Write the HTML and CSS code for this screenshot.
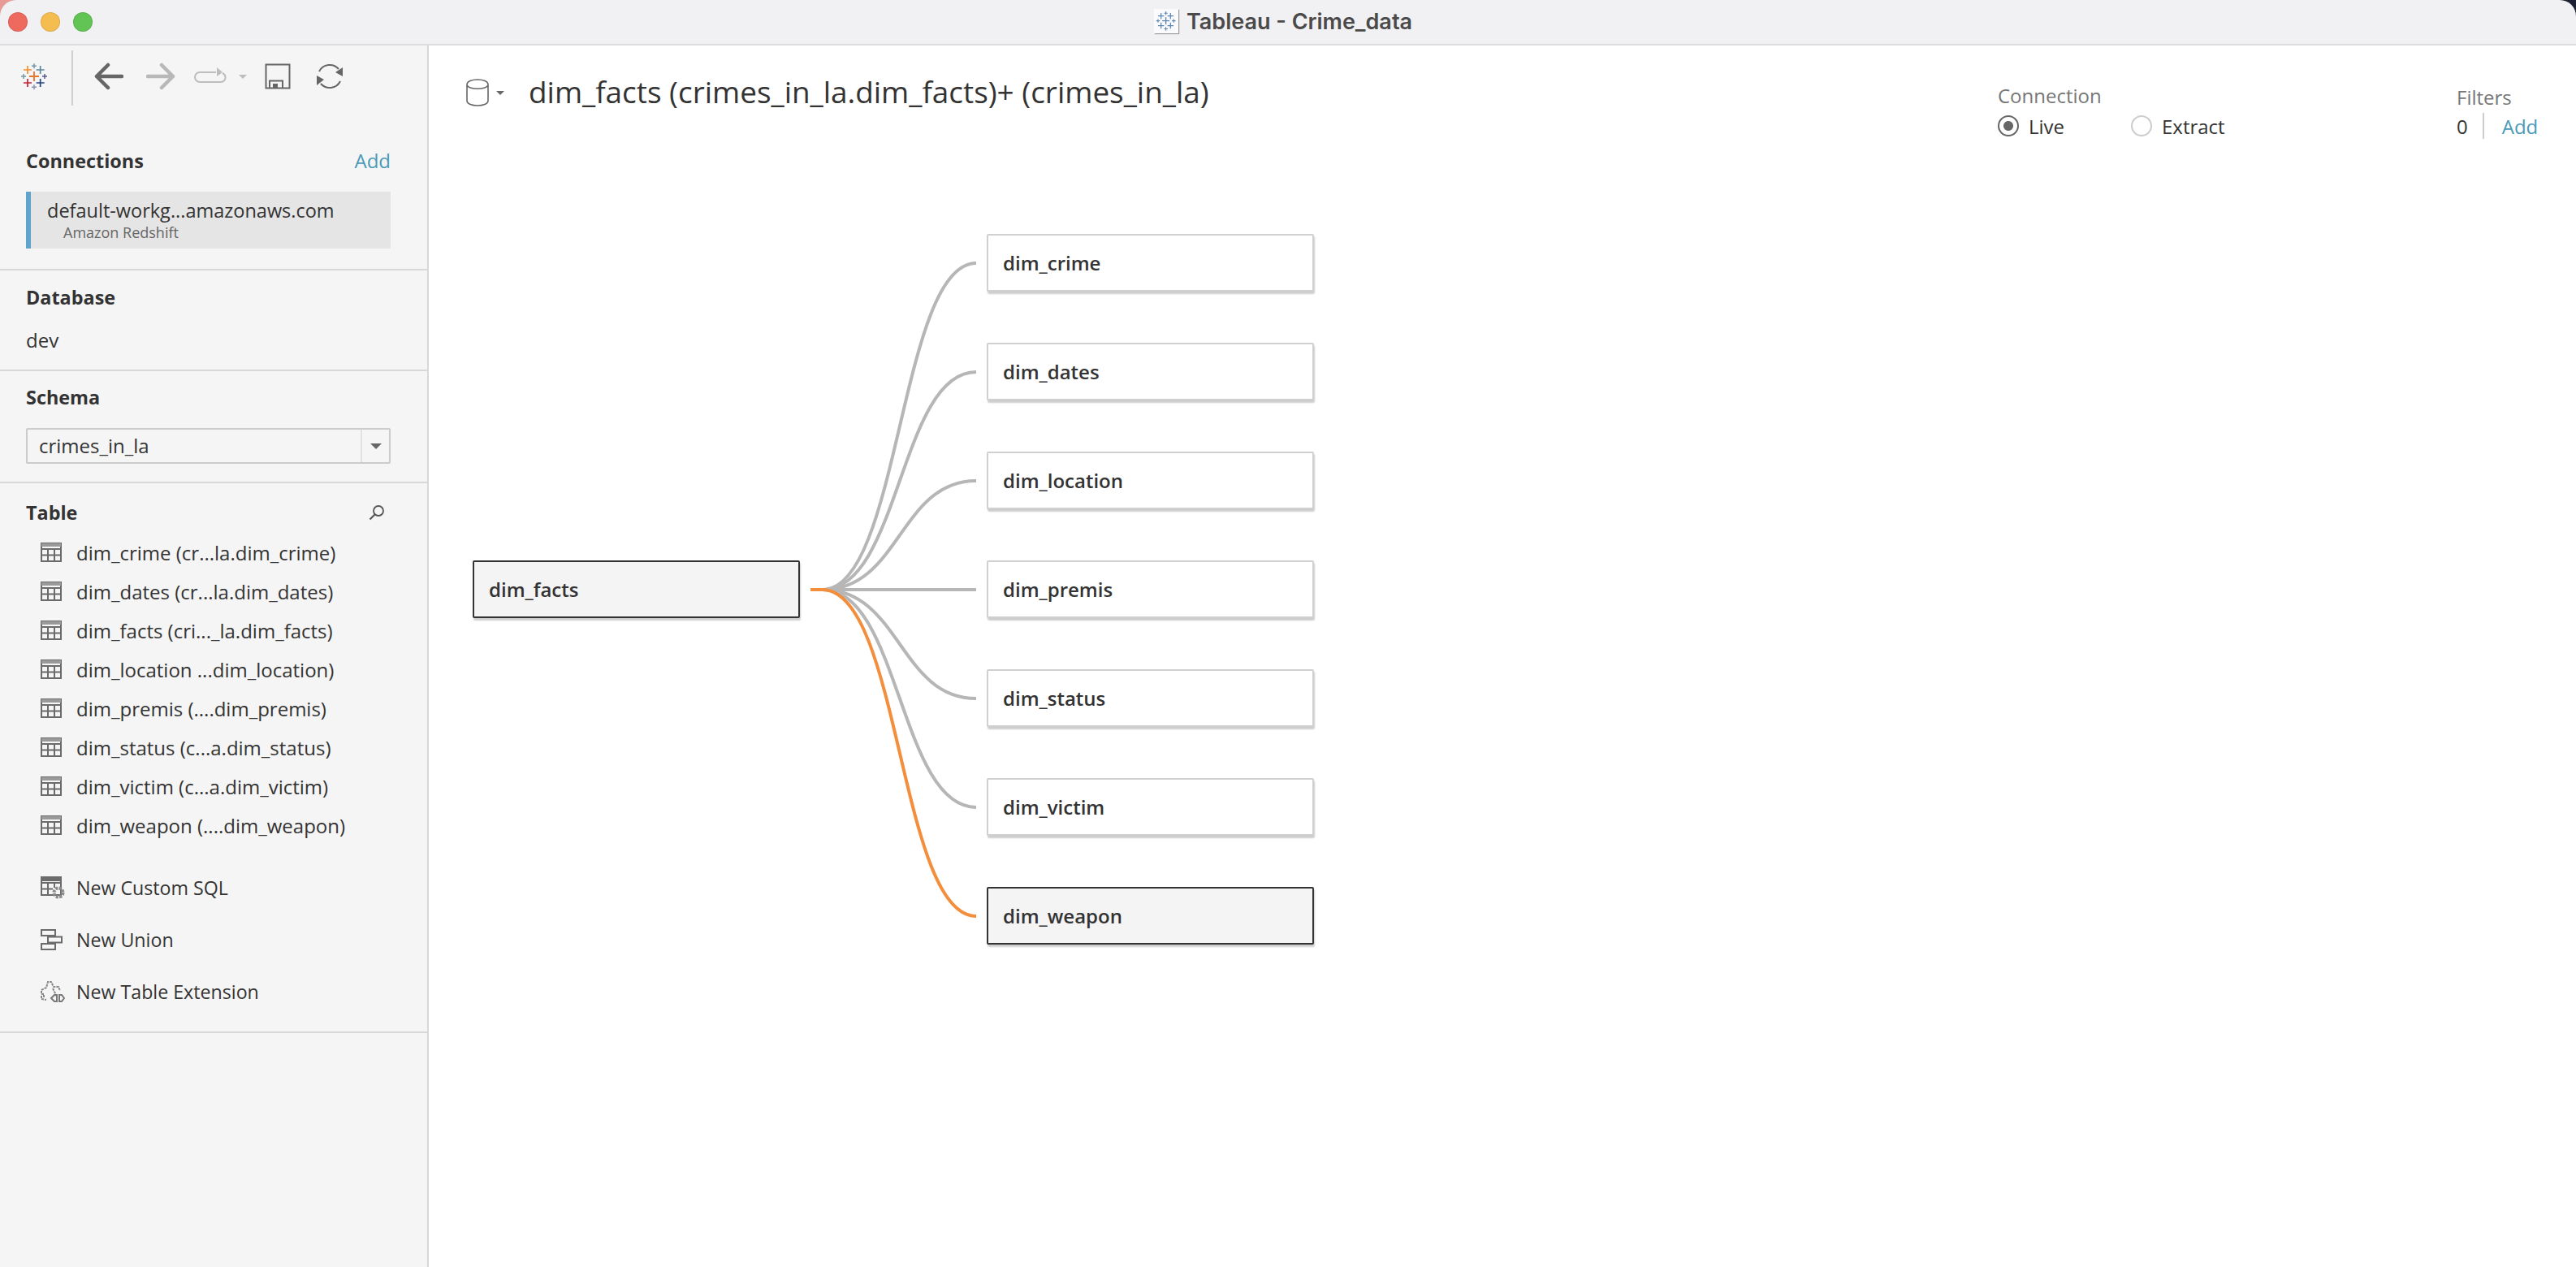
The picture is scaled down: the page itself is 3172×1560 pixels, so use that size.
FILE: index.html
```html
<!DOCTYPE html>
<html lang="en">
<head>
    <meta charset="UTF-8">
    <title>Tableau - Crime_data</title>
    <link rel="stylesheet" href="styles.css">
</head>
<body>
    <svg class="defs" width="0" height="0">
        <symbol id="tbl" viewBox="0 0 26 24">
            <path d="M1 1h24v22H1zM1 8h24M1 15.500h24M9 8v15M17 8v15" fill="none" stroke="#6b6b6b" stroke-width="2"/>
            <path d="M1 1h24v4H1z" fill="#9a9a9a"/>
        </symbol>
        <symbol id="crosses" viewBox="15 50 105 105">
            <path d="M66 83v36M48 101h36" stroke-width="5.500"/>
            <path d="M42 62v30M27 77h30M89 62v30M74 77h30M42 110v30M27 125h30M89 110v30M74 125h30" stroke-width="5"/>
            <path d="M66 54v18M57 63h18M27 92v18M18 101h18M105 92v18M96 101h18M66 132v18M57 141h18" stroke-width="4.500"/>
        </symbol>
    </svg>

    <div class="titlebar">
        <div class="lights">
            <span class="light red"></span>
            <span class="light yellow"></span>
            <span class="light green"></span>
        </div>
        <div class="wintitle">
            <span class="docicon"><svg width="26" height="26" class="bluecross"><use href="#crosses"/></svg></span>
            <span>Tableau - Crime_data</span>
        </div>
        <div></div>
    </div>

    <div class="app">
        <div class="sidebar">
            <div class="toolbar">
                <svg class="logo" viewBox="15 50 105 105" width="35" height="35">
                    <path d="M66 83v36M48 101h36" stroke="#e8762d" stroke-width="5.500"/>
                    <path d="M42 62v30M27 77h30" stroke="#f28e2b" stroke-width="5"/>
                    <path d="M89 62v30M74 77h30" stroke="#5b879b" stroke-width="5"/>
                    <path d="M42 110v30M27 125h30" stroke="#c72037" stroke-width="5"/>
                    <path d="M89 110v30M74 125h30" stroke="#1f447f" stroke-width="5"/>
                    <path d="M66 54v18M57 63h18M27 92v18M18 101h18" stroke="#7099a6" stroke-width="4.500"/>
                    <path d="M105 92v18M96 101h18" stroke="#59598e" stroke-width="4.500"/>
                    <path d="M66 132v18M57 141h18" stroke="#8b91b5" stroke-width="4.500"/>
                </svg>
                <span class="tooldiv"></span>
                <svg class="tool back" width="36" height="34" viewBox="0 0 36 34"><path d="M34 17H3M17 3L3 17l14 14" fill="none" stroke="#666" stroke-width="4.500" stroke-linecap="round" stroke-linejoin="round"/></svg>
                <svg class="tool fwd" width="36" height="34" viewBox="0 0 36 34"><path d="M2 17h31M19 3l14 14-14 14" fill="none" stroke="#b8b8b8" stroke-width="4.500" stroke-linecap="round" stroke-linejoin="round"/></svg>
                <svg class="tool redo" width="42" height="20" viewBox="0 0 42 20"><path d="M28 7H8a5.500 5.500 0 0 0 0 12h26a5.500 5.500 0 0 0 5.500-6c0-2-1.500-4-3.500-5" fill="none" stroke="#bdbdbd" stroke-width="2"/><path d="M29 1l7 6-7 5z" fill="#bdbdbd"/></svg>
                <span class="caret redocaret"></span>
                <svg class="tool save" width="32" height="32" viewBox="0 0 32 32"><path d="M1.500 1.500h29v29h-29zM6 30.500v-9h16v9" fill="none" stroke="#666" stroke-width="2"/><path d="M10 25h6v6h-6z" fill="#666"/></svg>
                <svg class="tool refresh" width="34" height="32" viewBox="0 0 34 32"><path d="M4 10A14.500 14.500 0 0 1 28 7M30 22A14.500 14.500 0 0 1 6 25" fill="none" stroke="#666" stroke-width="2"/><path d="M33 5v11l-9-5zM1 27V15l9 5z" fill="#666"/></svg>
            </div>

            <div class="section conn">
                <div class="sechead"><span>Connections</span><a class="add">Add</a></div>
                <div class="connbox">
                    <div class="connname">default-workg...amazonaws.com</div>
                    <div class="conntype">Amazon Redshift</div>
                </div>
            </div>

            <div class="section db">
                <div class="sechead"><span>Database</span></div>
                <div class="dbname">dev</div>
            </div>

            <div class="section schema">
                <div class="sechead"><span>Schema</span></div>
                <div class="combo">
                    <span class="comboval">crimes_in_la</span>
                    <span class="combobtn"><span class="caret"></span></span>
                </div>
            </div>

            <div class="section tables">
                <div class="sechead">
                    <span>Table</span>
                    <svg class="search" width="20" height="20" viewBox="0 0 20 20"><circle cx="12" cy="8" r="6" fill="none" stroke="#555" stroke-width="1.800"/><path d="M7.500 12.500L1.500 18.500" stroke="#555" stroke-width="2.200"/></svg>
                </div>
                <ul class="tablelist">
                    <li><svg class="ico" width="26" height="24"><use href="#tbl"/></svg>dim_crime (cr...la.dim_crime)</li>
                    <li><svg class="ico" width="26" height="24"><use href="#tbl"/></svg>dim_dates (cr...la.dim_dates)</li>
                    <li><svg class="ico" width="26" height="24"><use href="#tbl"/></svg>dim_facts (cri..._la.dim_facts)</li>
                    <li><svg class="ico" width="26" height="24"><use href="#tbl"/></svg>dim_location ...dim_location)</li>
                    <li><svg class="ico" width="26" height="24"><use href="#tbl"/></svg>dim_premis (....dim_premis)</li>
                    <li><svg class="ico" width="26" height="24"><use href="#tbl"/></svg>dim_status (c...a.dim_status)</li>
                    <li><svg class="ico" width="26" height="24"><use href="#tbl"/></svg>dim_victim (c...a.dim_victim)</li>
                    <li><svg class="ico" width="26" height="24"><use href="#tbl"/></svg>dim_weapon (....dim_weapon)</li>
                </ul>
                <ul class="newlist">
                    <li>
                        <svg class="ico" width="30" height="28" viewBox="0 0 30 28" overflow="visible">
                            <path d="M1 1h24v22H1zM1 8h24M1 15.500h14M9 8v15M17 8v6" fill="none" stroke="#6b6b6b" stroke-width="2"/>
                            <path d="M1 0h24v6H1z" fill="#6b6b6b"/>
                            <circle cx="22" cy="20" r="5.500" fill="none" stroke="#8a8a8a" stroke-width="4" stroke-dasharray="3 1.300"/>
                        </svg>New Custom SQL
                    </li>
                    <li>
                        <svg class="ico" width="30" height="26" viewBox="0 0 30 26"><path d="M1 1h17v7H1zM9 9.500h17v7H9zM1 18h17v7H1z" fill="none" stroke="#6b6b6b" stroke-width="2"/></svg>New Union
                    </li>
                    <li>
                        <svg class="ico" width="30" height="28" viewBox="0 0 30 28"><path d="M1 12l6-3 2-7h4l3 6h6l2 5M1 13v4h3v3H1v3l6 1M15 10l5 10" fill="none" stroke="#8a8a8a" stroke-width="2" stroke-dasharray="3 1"/><path d="M13 22l4-4h3v8h-3zM23 18h3l3 4-3 4h-3z" fill="none" stroke="#777" stroke-width="2"/></svg>New Table Extension
                    </li>
                </ul>
            </div>
        </div>

        <div class="main">
            <div class="header">
                <svg class="dbicon" width="28" height="34" viewBox="0 0 28 34"><path d="M1 7v20c0 8 26 8 26 0V7C27-1 1-1 1 7c0 7 26 7 26 0" fill="none" stroke="#666" stroke-width="1.600"/></svg>
                <span class="caret small"></span>
                <h1 class="dstitle">dim_facts (crimes_in_la.dim_facts)+ (crimes_in_la)</h1>
                <div class="connpick">
                    <div class="hdrlabel">Connection</div>
                    <div class="radios">
                        <label class="radio"><span class="dot on"></span>Live</label>
                        <label class="radio"><span class="dot"></span>Extract</label>
                    </div>
                </div>
                <div class="filters">
                    <div class="hdrlabel">Filters</div>
                    <div class="filterrow"><span>0</span><span class="sep"></span><a class="add">Add</a></div>
                </div>
            </div>

            <div class="diagram">
                <svg class="links" width="900" height="1200" fill="none" stroke-width="4">
                    <g stroke="#b6b6b6">
                        <path d="M470 670H485C580 670 580 268 674 268"/>
                        <path d="M470 670H485C580 670 580 402 674 402"/>
                        <path d="M470 670H485C580 670 580 536 674 536"/>
                        <path d="M470 670H674"/>
                        <path d="M470 670H485C580 670 580 804 674 804"/>
                        <path d="M470 670H485C580 670 580 938 674 938"/>
                    </g>
                    <path d="M470 670H485C580 670 580 1072 674 1072" stroke="#f28e3c"/>
                </svg>
                <div class="node picked">dim_facts</div>
                <div class="joined">
                    <div class="node">dim_crime</div>
                    <div class="node">dim_dates</div>
                    <div class="node">dim_location</div>
                    <div class="node">dim_premis</div>
                    <div class="node">dim_status</div>
                    <div class="node">dim_victim</div>
                    <div class="node picked">dim_weapon</div>
                </div>
            </div>
        </div>
    </div>
</body>
</html>
```

FILE: styles.css
```css
* {
    box-sizing: border-box;
}

body {
    margin: 0;
    width: 3172px;
    height: 1560px;
    overflow: hidden;
    font-family: "Open Sans", sans-serif;
    color: #333;
    background: linear-gradient(90deg, #e79a96 0 50%, #1c2033 50% 100%);
}

ul {
    list-style: none;
    margin: 0;
    padding: 0;
}

.defs {
    position: absolute;
}

.titlebar {
    display: grid;
    grid-template-columns: 1fr auto 1fr;
    align-items: center;
    height: 56px;
    background: #f1f1f3;
    border-bottom: 2px solid #dcdcdc;
    border-radius: 20px 20px 0 0;
}

.lights {
    display: flex;
    gap: 16px;
    padding-left: 10px;
}

.light {
    width: 24px;
    height: 24px;
    border-radius: 50%;
    border: 1px solid rgba(0, 0, 0, 0.1);
}

.red {
    background: #ee6a5f;
}

.yellow {
    background: #f5bd4f;
}

.green {
    background: #61c454;
}

.wintitle {
    display: flex;
    align-items: center;
    gap: 10px;
    margin: -2px 12px 0 0;
    font-family: Inter, sans-serif;
    font-size: 27px;
    font-weight: 600;
    color: #4a4a4a;
}

.docicon {
    display: flex;
    align-items: center;
    justify-content: center;
    width: 30px;
    height: 30px;
    background: #fbfbfd;
    box-shadow: 1px 1px 1px rgba(0, 0, 0, 0.35);
}

.bluecross {
    stroke: #5b87b5;
}

.app {
    display: flex;
    height: 1504px;
    background: #fff;
}

.sidebar {
    width: 528px;
    flex: none;
    background: #f5f5f5;
    border-right: 2px solid #d8d8d8;
}

.toolbar {
    display: flex;
    align-items: center;
    height: 80px;
    padding-left: 25px;
}

.logo {
    flex: none;
    margin-top: -4px;
}

.tooldiv {
    width: 2px;
    height: 68px;
    margin: 0 26px 0 28px;
    background: #cfcfcf;
}

.tool {
    flex: none;
    margin-top: -4px;
}

.fwd {
    margin-left: 28px;
}

.redo {
    margin-left: 22px;
    margin-top: -8px;
}

.caret {
    display: inline-block;
    width: 0;
    height: 0;
    border-left: 7px solid transparent;
    border-right: 7px solid transparent;
    border-top: 7px solid #666;
}

.redocaret {
    margin: -4px 0 0 14px;
    border-top-color: #bdbdbd;
    border-left-width: 5px;
    border-right-width: 5px;
    border-top-width: 5px;
}

.save {
    margin-left: 22px;
}

.refresh {
    margin-left: 31px;
}

.section {
    border-bottom: 2px solid #d8d8d8;
}

.sechead {
    display: flex;
    justify-content: space-between;
    align-items: center;
    height: 40px;
    padding: 0 45px 3px 32px;
    font-size: 23.4px;
    font-weight: 700;
}

.add {
    flex: none;
    font-size: 24px;
    font-weight: 400;
    color: #4a9ab8;
}

.conn {
    padding: 43px 0 25px;
}

.connbox {
    margin: 17px 45px 0 32px;
    height: 70px;
    padding: 6px 0 0 20px;
    background: #e5e5e5;
    border-left: 6px solid #5fa4cc;
}

.connname {
    font-size: 23.5px;
    line-height: 34px;
}

.conntype {
    padding-left: 20px;
    font-size: 18px;
    line-height: 20px;
    color: #666;
}

.db {
    padding: 14px 0 16px;
}

.dbname {
    margin-top: 12px;
    padding-left: 32px;
    font-size: 24px;
    line-height: 40px;
}

.schema {
    padding: 13px 0 22px;
}

.combo {
    display: flex;
    align-items: stretch;
    height: 44px;
    margin: 17px 45px 0 32px;
    border: 2px solid #cbcbcb;
    border-radius: 2px;
}

.comboval {
    flex: 1;
    padding-left: 14px;
    font-size: 24px;
    line-height: 39px;
}

.combobtn {
    display: flex;
    align-items: center;
    justify-content: center;
    width: 35px;
    border-left: 2px solid #e2e2e2;
}

.tables {
    padding: 17px 0 16px;
}

.search {
    margin-right: 7px;
}

.tablelist {
    margin-top: 4px;
}

.tablelist li,
.newlist li {
    display: flex;
    align-items: center;
    padding-left: 50px;
    font-size: 24px;
    white-space: nowrap;
}

.tablelist li {
    height: 48px;
}

.newlist {
    margin-top: 22px;
}

.newlist li {
    height: 64px;
    padding-bottom: 2px;
    font-size: 23.200px;
}

.ico {
    flex: none;
}

.tablelist .ico {
    margin-right: 18px;
}

.newlist .ico {
    margin-right: 14px;
}

.main {
    position: relative;
    flex: 1;
}

.header {
    display: flex;
    align-items: flex-start;
    height: 170px;
    padding: 0 49px 0 46px;
}

.dbicon {
    margin-top: 41px;
    flex: none;
}

.caret.small {
    margin: 56px 0 0 9px;
    border-left-width: 5px;
    border-right-width: 5px;
    border-top-width: 5px;
}

.dstitle {
    margin: 35px 0 0 30px;
    font-size: 36.900px;
    font-weight: 400;
    line-height: 44px;
}

.connpick {
    margin: 47px 0 0 auto;
    width: 565px;
}

.hdrlabel {
    font-size: 24px;
    line-height: 30px;
    color: #777;
}

.radios {
    display: flex;
    align-items: center;
    height: 36px;
    margin-top: 4px;
}

.radio {
    display: flex;
    align-items: center;
    gap: 12px;
    width: 164px;
    font-size: 24px;
}

.dot {
    width: 26px;
    height: 26px;
    border: 2px solid #ccc;
    border-radius: 50%;
    background: #fff;
}

.dot.on {
    border-color: #666;
    background: radial-gradient(circle, #666 0 5.500px, #fff 6.500px);
}

.filters {
    width: 98px;
    margin-top: 49px;
}

.filterrow {
    display: flex;
    align-items: center;
    height: 36px;
    margin-top: 2px;
    font-size: 24px;
}

.sep {
    flex: none;
    width: 2px;
    height: 32px;
    margin: 0 22px 0 18px;
    background: #ccc;
}

.diagram {
    display: flex;
    align-items: center;
    padding: 62px 0 0 54px;
}

.links {
    position: absolute;
    left: 0;
    top: 0;
}

.node {
    position: relative;
    display: flex;
    align-items: center;
    width: 403px;
    height: 71px;
    padding-left: 18px;
    font-size: 24px;
    font-weight: 600;
    background: #fff;
    border: 2px solid #d0d0d0;
    border-radius: 2px;
    box-shadow: 1px 3px 2px rgba(0, 0, 0, 0.2);
}

.node.picked {
    background: #f4f4f4;
    border-color: #333;
}

.joined {
    display: flex;
    flex-direction: column;
    gap: 63px;
    margin-left: 230px;
}
```
